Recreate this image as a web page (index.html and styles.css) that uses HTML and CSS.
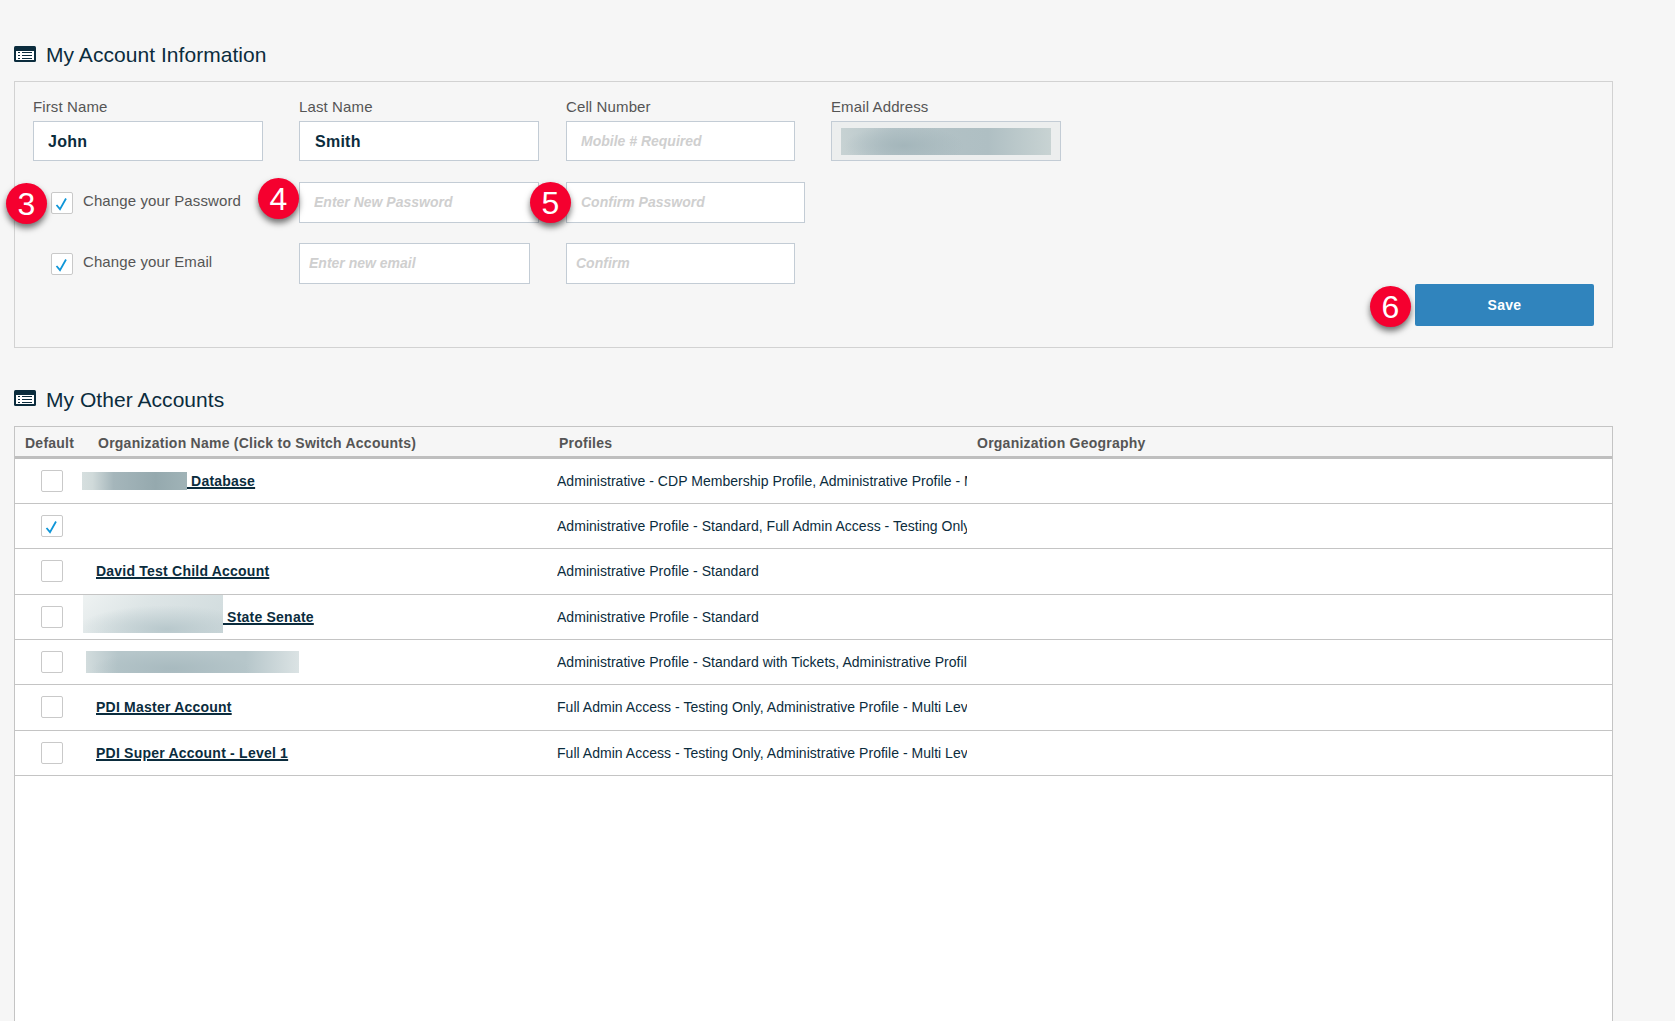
FILE: index.html
```html
<!DOCTYPE html>
<html lang="en">
<head>
<meta charset="utf-8">
<title>My Account Information</title>
<link rel="stylesheet" href="styles.css">
</head>
<body>
<main class="page">
  <h2 class="section-title">
    <svg class="title-icon" viewBox="0 0 22 16"><rect width="22" height="16" rx="1.5" fill="#0b2c3d"/><rect x="2" y="5" width="18" height="9" fill="#fff"/><path d="M4 6.5h2M4 9.5h2M4 12.5h2M8 6.5h10M8 9.5h10M8 12.5h10" stroke="#0b2c3d" stroke-width="1.2"/></svg>
    My Account Information
  </h2>
  <section class="panel">
    <div class="form-grid">
      <div class="field"><label class="field-label">First Name</label><input class="input input-value w-first" value="John"></div>
      <div class="field"><label class="field-label">Last Name</label><input class="input input-value input-pad-16 w-last" value="Smith"></div>
      <div class="field"><label class="field-label">Cell Number</label><input class="input w-cell" placeholder="Mobile # Required"></div>
      <div class="field"><label class="field-label">Email Address</label><div class="input email-readonly"><span class="blur blur-email"></span></div></div>

      <div class="check-row"><span class="badge badge-3">3</span>
        <span class="check"><svg viewBox="0 0 20 20"><path d="M4.5 12L8 16.2 14 5.5" fill="none" stroke="#0f96d8" stroke-width="1.8"/></svg></span><span class="check-label">Change your Password</span></div>
      <div class="overlay-host"><span class="badge badge-4">4</span><input class="input tall w-last" placeholder="Enter New Password"></div>
      <div class="overlay-host"><span class="badge badge-5">5</span><input class="input tall w-confirm-pw" placeholder="Confirm Password"></div>
      <div></div>

      <div class="check-row"><span class="check"><svg viewBox="0 0 20 20"><path d="M4.5 12L8 16.2 14 5.5" fill="none" stroke="#0f96d8" stroke-width="1.8"/></svg></span><span class="check-label">Change your Email</span></div>
      <div><input class="input tall input-pad-10 w-new-email" placeholder="Enter new email"></div>
      <div><input class="input tall input-pad-10 w-cell" placeholder="Confirm"></div>
    </div>
    <div class="panel-footer">
      <div class="overlay-host"><span class="badge badge-6">6</span><button class="save-btn">Save</button></div>
    </div>
  </section>

  <h2 class="section-title section-title-second">
    <svg class="title-icon" viewBox="0 0 22 16"><rect width="22" height="16" rx="1.5" fill="#0b2c3d"/><rect x="2" y="5" width="18" height="9" fill="#fff"/><path d="M4 6.5h2M4 9.5h2M4 12.5h2M8 6.5h10M8 9.5h10M8 12.5h10" stroke="#0b2c3d" stroke-width="1.2"/></svg>
    My Other Accounts
  </h2>
  <section class="accounts">
    <div class="accounts-head">
      <span>Default</span><span>Organization Name (Click to Switch Accounts)</span><span>Profiles</span><span>Organization Geography</span>
    </div>
    <div class="account-row">
      <span class="check"></span>
      <a class="org-link" href="#"><span class="blur blur-db"></span> Database</a>
      <div class="profiles">Administrative - CDP Membership Profile, Administrative Profile - Multi Level Access</div>
    </div>
    <div class="account-row">
      <span class="check"><svg viewBox="0 0 20 20"><path d="M4.5 12L8 16.2 14 5.5" fill="none" stroke="#0f96d8" stroke-width="1.8"/></svg></span>
      <span></span>
      <div class="profiles">Administrative Profile - Standard, Full Admin Access - Testing Only</div>
    </div>
    <div class="account-row">
      <span class="check"></span>
      <a class="org-link org-indent" href="#">David Test Child Account</a>
      <div class="profiles">Administrative Profile - Standard</div>
    </div>
    <div class="account-row">
      <span class="check"></span>
      <a class="org-link org-raised" href="#"><span class="blur blur-senate"></span> State Senate</a>
      <div class="profiles">Administrative Profile - Standard</div>
    </div>
    <div class="account-row">
      <span class="check"></span>
      <span class="blur blur-wide"></span>
      <div class="profiles">Administrative Profile - Standard with Tickets, Administrative Profile - Multi Level</div>
    </div>
    <div class="account-row">
      <span class="check"></span>
      <a class="org-link org-indent" href="#">PDI Master Account</a>
      <div class="profiles">Full Admin Access - Testing Only, Administrative Profile - Multi Level Access</div>
    </div>
    <div class="account-row">
      <span class="check"></span>
      <a class="org-link org-indent" href="#">PDI Super Account - Level 1</a>
      <div class="profiles">Full Admin Access - Testing Only, Administrative Profile - Multi Level Access</div>
    </div>
  </section>
</main>
</body>
</html>
```

FILE: styles.css
```css
* { box-sizing: border-box; }
html, body { margin: 0; height: 100%; overflow: hidden; }
body { background: #f6f6f6; font-family: "Liberation Sans", Arial, sans-serif; color: #555; }

.page { display: flex; flex-direction: column; height: 1021px; width: 1599px; margin-left: 14px; padding-top: 43px; }

.section-title { display: flex; align-items: center; gap: 10px; height: 24px; margin: 0 0 14px; font-size: 21px; font-weight: 400; line-height: 24px; letter-spacing: .05px; color: #0b2c3d; }
.section-title-second { margin-top: 40px; }
.title-icon { width: 22px; height: 16px; flex: none; margin-top: -2px; }
.section-title-second .title-icon { margin-top: -4px; }

.panel { height: 267px; border: 1px solid #d2d2d2; padding: 16px 18px 20px; }
.form-grid { display: grid; grid-template-columns: 266px 267px 265px 230px; grid-template-rows: 64px 41px 41px; row-gap: 20px; }

.field { display: flex; flex-direction: column; align-items: flex-start; }
.field-label { display: block; height: 18px; margin-bottom: 5px; font-size: 15px; line-height: 18px; letter-spacing: .12px; color: #555; }

.input { display: block; height: 40px; padding: 0 14px; border: 1px solid #c3ccd5; border-radius: 0; background: #fff; font-family: "Liberation Sans", Arial, sans-serif; font-size: 14px; font-style: italic; font-weight: 700; color: #333; outline: none; }
.input::placeholder { color: #cfcfcf; opacity: 1; }
.input.tall { height: 41px; padding-bottom: 2px; }
.input-value { padding-top: 2px; font-size: 16px; font-style: normal; letter-spacing: .25px; color: #0b2c3d; }
.input-pad-16 { padding-left: 15px; }
.input-pad-10 { padding-left: 9px; }
.w-first { width: 230px; }
.w-last { width: 240px; }
.w-cell { width: 229px; }
.w-confirm-pw { width: 239px; }
.w-new-email { width: 231px; }

.email-readonly { display: flex; align-items: center; width: 230px; padding: 0 9px; background: #eceeee; }

.blur { display: inline-block; }
.blur-email { width: 211px; height: 27px; background: radial-gradient(ellipse 60px 20px at 30% 65%, #a4b6bb, rgba(164,182,187,0)), linear-gradient(90deg, #c7d2d3, #b4c3c7 25%, #afbfc3 70%, #c8d3d3); }
.blur-db { width: 105px; height: 18px; vertical-align: -4px; background: linear-gradient(90deg, #d6dfdf, #d0dada 10%, #a5b6bb 30%, #95a9ae 70%, #a0b3b7); }
.blur-senate { width: 140px; height: 38px; margin-left: 1px; vertical-align: -11px; background: radial-gradient(ellipse 90px 24px at 60% 90%, #b8c8cc, rgba(184,200,204,0)), linear-gradient(135deg, #eef2f2, #dde5e6 40%, #d0dbdd); }
.blur-wide { width: 213px; height: 22px; margin-left: 4px; background: radial-gradient(ellipse 80px 18px at 40% 80%, #a8babf, rgba(168,186,191,0)), linear-gradient(90deg, #d2dcdd, #b6c6ca 15%, #b6c6ca 75%, #dbe3e4); }

.check-row { position: relative; display: flex; align-items: center; padding-left: 18px; font-size: 15px; letter-spacing: .1px; color: #555; }
.check-label { margin-bottom: 5px; }
.check { display: block; flex: none; width: 22px; height: 22px; margin-right: 10px; border: 1px solid #c9c9c9; border-radius: 2px; background: #fff; }
.check svg { display: block; width: 20px; height: 20px; }

.overlay-host { position: relative; }
.badge { position: absolute; z-index: 2; display: flex; align-items: center; justify-content: center; width: 41px; height: 41px; border-radius: 50%; background: #f5002f; box-shadow: 0 4px 6px rgba(0,0,0,.55); color: #fff; font-size: 32px; line-height: 1; }
.badge-3 { left: -27px; top: 1px; }
.badge-4 { left: -41px; top: -4px; }
.badge-5 { left: -36px; top: 0; }
.badge-6 { left: -45px; top: 2px; }

.panel-footer { display: flex; justify-content: flex-end; }
.save-btn { display: block; width: 179px; height: 42px; border: 0; border-radius: 2px; background: #3084bd; color: #fff; font-family: "Liberation Sans", Arial, sans-serif; font-size: 14px; font-weight: 700; letter-spacing: .3px; }

.accounts { flex: 1; border: 1px solid #c4c4c4; border-bottom: 0; background: #fff; }
.accounts-head { display: grid; grid-template-columns: 73px 461px 418px 1fr; align-items: center; height: 31.67px; padding-top: 4px; padding-left: 10px; border-bottom: 3px solid #bfbfbf; background: #f6f6f6; font-size: 14px; font-weight: 700; letter-spacing: .24px; color: #555; }

.account-row { display: grid; grid-template-columns: 67px 475px 410px; align-items: center; height: 45.33px; border-bottom: 1px solid #c4c4c4; }
.account-row .check { margin-left: 26px; margin-right: 0; }
.org-link { font-size: 14px; font-weight: 700; letter-spacing: .22px; color: #0b2c3d; text-decoration: underline; text-decoration-thickness: 2px; white-space: nowrap; }
.org-indent { margin-left: 14px; }
.org-raised { margin-bottom: 6px; }
.profiles { overflow: hidden; font-size: 14px; letter-spacing: .03px; white-space: nowrap; color: #0b2c3d; }
```
